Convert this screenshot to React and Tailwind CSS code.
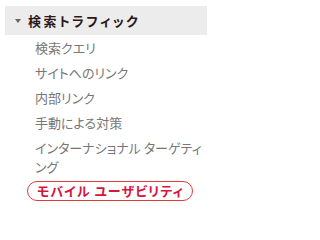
export default function App() {
  const items = [
    "検索クエリ",
    "サイトへのリンク",
    "内部リンク",
    "手動による対策",
    "インターナショナル ターゲティング",
  ];

  return (
    <div
      className="w-[211px] h-[207px] bg-white pt-[6px] pl-[5px] pr-[4px] overflow-hidden"
      style={{ fontFamily: '"Noto Sans CJK JP", "Noto Sans", sans-serif', fontFeatureSettings: '"palt"' }}
    >
      {/* section header */}
      <div className="h-[29px] bg-[#ececec] flex items-center pl-[10px]">
        <span className="w-0 h-0 border-l-[3px] border-r-[3px] border-t-[4px] border-l-transparent border-r-transparent border-t-[#666] mr-[7px]" />
        <span className="text-[13px] font-bold tracking-[2.4px] text-[#2b1818] leading-none">検索トラフィック</span>
      </div>

      <ul className="pl-[30px] pr-[2px]">
        {items.map((label) => (
          <li key={label} className="py-[3px] text-[13px] leading-[19px] text-[#777]">
            {label}
          </li>
        ))}
        <li className="py-[2px] -ml-[8px] w-[166px]">
          <div className="h-[20px] rounded-full border-[1.5px] border-[#e03a3a] flex items-center pl-[9px] text-[13px] font-bold tracking-[1px] text-[#d4163c]">
            モバイル ユーザビリティ
          </div>
        </li>
      </ul>
    </div>
  );
}
